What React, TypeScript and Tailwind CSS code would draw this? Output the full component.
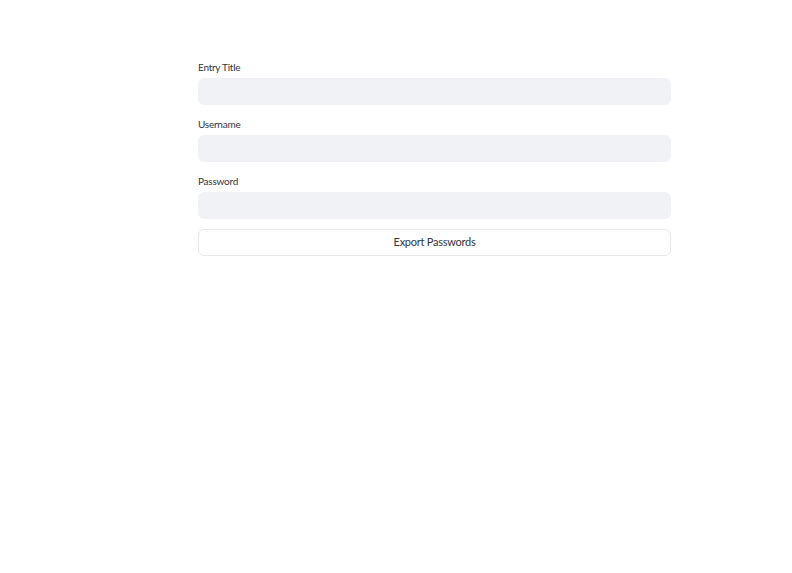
export default function App() {
  const fields = ['Entry Title', 'Username', 'Password'];
  return (
    <div className="min-h-screen bg-white font-['Lato',sans-serif] text-[#31333f]">
      <div className="ml-[198px] w-[473px] pt-[60px] flex flex-col">
        {fields.map((label, i) => (
          <div key={label} className={i > 0 ? 'mt-[12.5px]' : ''}>
            <label className="block text-[10px] leading-[15px] tracking-[-0.25px]">{label}</label>
            <input
              type={label === 'Password' ? 'password' : 'text'}
              className="mt-[3px] block h-[26.5px] w-full rounded-[6px] bg-[#f0f2f6] px-2 text-[12px] outline-none"
            />
          </div>
        ))}
        <button className="mt-[10.5px] h-[27px] w-full rounded-[6px] border border-[#e6e7ea] bg-white text-[11px] tracking-[-0.25px] text-[#31333f]">
          Export Passwords
        </button>
      </div>
    </div>
  );
}
